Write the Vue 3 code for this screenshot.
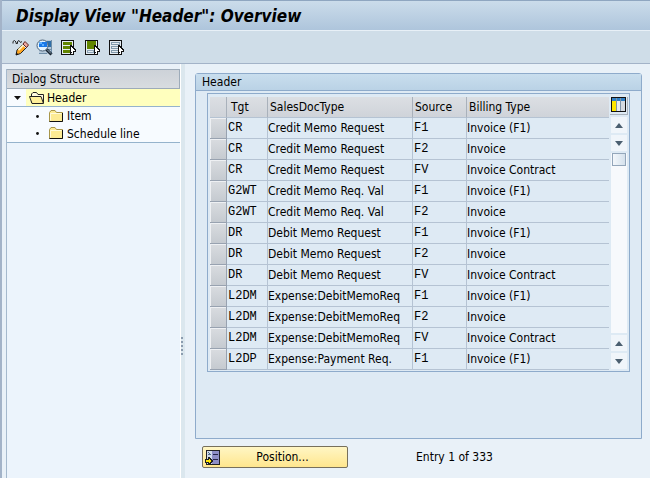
<template>
  <div class="window">
    <header class="title-bar">
      <h1>Display View "Header": Overview</h1>
    </header>

    <!-- Application toolbar -->
    <div class="toolbar">
      <button class="tool-btn" aria-label="Display / Change">
        <svg width="17" height="17" viewBox="0 0 17 17">
          <path d="M1 4.500 V2.500 L2.500 1.500 L4 3 V4.500 H5.500 V2.500 L7 1.500 L8.500 3.500 L10 2.500" fill="none" stroke="#222" stroke-width="1" />
          <path d="M5 11 L12 4 L15.500 7.500 L8.500 14.500 L4 16 Z" fill="#ffa51f" stroke="#222" />
          <path d="M6.500 11 L12.500 5" stroke="#fff0c0" stroke-width="2" />
          <path d="M11 5 L13 2.500 L16.500 6 L14.500 8.500 Z" fill="#f0a8a0" stroke="#5a2420" />
          <path d="M10.500 5.500 L14 9" stroke="#e8eef4" stroke-width="1" />
          <path d="M4 16 L4.500 13.500 L6.500 15.500 Z" fill="#111" />
        </svg>
      </button>
      <button class="tool-btn" aria-label="Details">
        <svg width="17" height="17" viewBox="0 0 17 17">
          <rect x="3" y="1" width="13" height="14" fill="#b4c8d9" />
          <rect x="10" y="2" width="5" height="6" fill="#2f6fa8" />
          <path d="M3 14.500 H11 M12 10.500 H16 M15.500 1 V15" stroke="#6f8ea8" />
          <circle cx="6.500" cy="6.500" r="5.500" fill="#e2f3ff" stroke="#4b6075" />
          <rect x="3" y="3" width="8" height="5" fill="#1878e8" />
          <path d="M3 3 H6 V5 H3 Z M6 5 H8 V7 H6 Z" fill="#5cb0ff" />
          <path d="M10.500 10.500 L15.500 15.500" stroke="#182430" stroke-width="3" />
          <path d="M11 10.500 L15 14.500" stroke="#8ea8bd" stroke-width="1" />
        </svg>
      </button>
      <button class="tool-btn" aria-label="Select all">
        <svg width="17" height="17" viewBox="0 0 17 17" shape-rendering="crispEdges">
          <rect x="1" y="1" width="13" height="15" fill="#111" />
          <rect x="2" y="2" width="11" height="13" fill="#e5ecf2" />
          <path d="M3 3 H12 V6 H3 Z M3 7 H12 V10 H3 Z M3 11 H12 V14 H3 Z" fill="#628500" />
          <path d="M10 6 H11 L16 11 V13 H14 V16 H12 V14 H11 V15 H10 Z" fill="#111" />
          <path d="M11 8 L15 12 H13 V15 H12 V13 H11 Z" fill="#fff" />
        </svg>
      </button>
      <button class="tool-btn" aria-label="Select block">
        <svg width="17" height="17" viewBox="0 0 17 17" shape-rendering="crispEdges">
          <rect x="1" y="1" width="13" height="15" fill="#111" />
          <rect x="2" y="2" width="11" height="13" fill="#e5ecf2" />
          <rect x="3" y="2" width="9" height="8" fill="#628500" />
          <rect x="3" y="11" width="7" height="3" fill="#8da3b5" />
          <rect x="4" y="12" width="5" height="1" fill="#e5ecf2" />
          <path d="M10 6 H11 L16 11 V13 H14 V16 H12 V14 H11 V15 H10 Z" fill="#111" />
          <path d="M11 8 L15 12 H13 V15 H12 V13 H11 Z" fill="#fff" />
        </svg>
      </button>
      <button class="tool-btn" aria-label="Deselect all">
        <svg width="17" height="17" viewBox="0 0 17 17" shape-rendering="crispEdges">
          <rect x="1" y="1" width="13" height="15" fill="#111" />
          <rect x="2" y="2" width="11" height="13" fill="#e5ecf2" />
          <path d="M3 3 H12 V6 H3 Z M3 7 H12 V10 H3 Z M3 11 H12 V14 H3 Z" fill="#8199ab" />
          <path d="M4 4 H11 V5 H4 Z M4 8 H11 V9 H4 Z M4 12 H11 V13 H4 Z" fill="#e5ecf2" />
          <path d="M10 6 H11 L16 11 V13 H14 V16 H12 V14 H11 V15 H10 Z" fill="#111" />
          <path d="M11 8 L15 12 H13 V15 H12 V13 H11 Z" fill="#fff" />
        </svg>
      </button>
    </div>

    <div class="work-area">
      <!-- Dialog structure tree -->
      <nav class="tree">
        <div class="tree-title">Dialog Structure</div>
        <ul>
          <li
            v-for="node in nodes"
            :key="node.label"
            :class="['tree-row', { root: node.root, last: node.last }]"
          >
            <span class="marker">
              <svg v-if="node.root" width="7" height="4" viewBox="0 0 7 4"><path d="M0 0 H7 L3.5 4 Z" fill="#111" /></svg>
              <svg v-else width="3" height="3" viewBox="0 0 3 3"><circle cx="1.5" cy="1.5" r="1.4" fill="#111" /></svg>
            </span>
            <a href="#" @click.prevent>
              <svg v-if="node.root" width="16" height="13" viewBox="0 0 16 13">
                <path d="M2.500 12 V3 L4 1.500 H7.500 L9 3.500 H14.500 V12" fill="#fffbe0" stroke="#222" />
                <path d="M0.500 5.500 H12 L14.500 12.500 H3 Z" fill="#fff09a" stroke="#222" />
              </svg>
              <svg v-else width="15" height="13" viewBox="0 0 15 13">
                <path d="M0.500 11.500 V2.500 L2 0.500 H6 L7.500 2.500 H13.500 V11.500 Z" fill="#fdeb94" stroke="#a8964a" />
                <path d="M1.500 10.500 V3.500 H12.500" fill="none" stroke="#fffbdc" />
                <path d="M0.500 11.500 H13.500 V3" fill="none" stroke="#111" />
              </svg>
              <span>{{ node.label }}</span>
            </a>
          </li>
        </ul>
      </nav>

      <div class="splitter"><i v-for="n in 5" :key="n"></i></div>

      <main class="content">
        <section class="panel">
          <h2>Header</h2>
          <div class="grid-box">
            <table>
              <thead>
                <tr>
                  <th class="col-sel"></th>
                  <th class="col-tgt">Tgt</th>
                  <th class="col-sales">SalesDocType</th>
                  <th class="col-source">Source</th>
                  <th>Billing Type</th>
                </tr>
              </thead>
              <tbody>
                <tr v-for="(row, idx) in rows" :key="idx">
                  <td class="sel"><button :aria-label="`Select row ${idx + 1}`"></button></td>
                  <td class="code">{{ row[0] }}</td>
                  <td>{{ row[1] }}</td>
                  <td class="code">{{ row[2] }}</td>
                  <td>{{ row[3] }}</td>
                </tr>
              </tbody>
            </table>
            <div class="side">
              <button class="config" aria-label="Table settings">
                <svg width="15" height="15" viewBox="0 0 15 15" shape-rendering="crispEdges">
                  <rect width="15" height="15" fill="#111" />
                  <rect x="1" y="1" width="13" height="3" fill="#2f7fc4" />
                  <rect x="1" y="4" width="4" height="10" fill="#ffe600" />
                  <rect x="6" y="4" width="3" height="10" fill="#e9ecf0" />
                  <rect x="10" y="4" width="4" height="10" fill="#d5dae0" />
                  <path d="M5 1 H6 V14 H5 Z M9 1 H10 V14 H9 Z" fill="#8094a8" />
                </svg>
              </button>
              <div class="scrollbar">
                <button class="arrow" aria-label="Scroll to top"><svg width="8" height="5" viewBox="0 0 8 5"><path d="M0 5 L4 0 L8 5 Z" fill="#4b5f70" /></svg></button>
                <button class="arrow" aria-label="Scroll up"><svg width="8" height="5" viewBox="0 0 8 5"><path d="M0 0 L4 5 L8 0 Z" fill="#4b5f70" /></svg></button>
                <div class="track"><div class="thumb"></div></div>
                <button class="arrow" aria-label="Scroll down"><svg width="8" height="5" viewBox="0 0 8 5"><path d="M0 5 L4 0 L8 5 Z" fill="#4b5f70" /></svg></button>
                <button class="arrow" aria-label="Scroll to bottom"><svg width="8" height="5" viewBox="0 0 8 5"><path d="M0 0 L4 5 L8 0 Z" fill="#4b5f70" /></svg></button>
              </div>
            </div>
          </div>
        </section>

        <div class="footer">
          <button class="btn-position">
            <svg width="15" height="15" viewBox="0 0 15 15" shape-rendering="crispEdges">
              <rect x="1" y="0" width="14" height="15" fill="#222" />
              <rect x="2" y="1" width="5" height="13" fill="#d3dceb" />
              <rect x="7" y="1" width="7" height="13" fill="#8e8ec6" />
              <path d="M8 4 H13 V5 H8 Z M8 9 H13 V10 H8 Z" fill="#26264a" />
              <path d="M3 2 H4 V3 H5 V4 H6 V5 H3 V4 H4 Z" fill="#54708c" />
              <path d="M0 9 H3 V7 H4 L8 11 L4 15 H3 V13 H0 Z" fill="#222" />
              <path d="M1 10 H4 V9 L6 11 L4 13 V12 H1 Z" fill="#ffe600" />
            </svg>
            <span>Position...</span>
          </button>
          <span class="entry">Entry 1 of 333</span>
        </div>
      </main>
    </div>
  </div>
</template>

<script setup>
const nodes = [
  { label: 'Header', root: true },
  { label: 'Item' },
  { label: 'Schedule line', last: true },
]

// Tgt, SalesDocType, Source, Billing Type
const rows = [
  ['CR', 'Credit Memo Request', 'F1', 'Invoice (F1)'],
  ['CR', 'Credit Memo Request', 'F2', 'Invoice'],
  ['CR', 'Credit Memo Request', 'FV', 'Invoice Contract'],
  ['G2WT', 'Credit Memo Req. Val', 'F1', 'Invoice (F1)'],
  ['G2WT', 'Credit Memo Req. Val', 'F2', 'Invoice'],
  ['DR', 'Debit Memo Request', 'F1', 'Invoice (F1)'],
  ['DR', 'Debit Memo Request', 'F2', 'Invoice'],
  ['DR', 'Debit Memo Request', 'FV', 'Invoice Contract'],
  ['L2DM', 'Expense:DebitMemoReq', 'F1', 'Invoice (F1)'],
  ['L2DM', 'Expense:DebitMemoReq', 'F2', 'Invoice'],
  ['L2DM', 'Expense:DebitMemoReq', 'FV', 'Invoice Contract'],
  ['L2DP', 'Expense:Payment Req.', 'F1', 'Invoice (F1)'],
]
</script>

<style>
body { margin: 0; background: #e9f1f8; }
</style>

<style scoped>
.window {
  box-sizing: border-box; min-height: 100vh;
  display: flex; flex-direction: column;
  border-left: 2px solid #a3b3c8;
  background: #e9f1f8; color: #000;
  font-family: "DejaVu Sans Condensed", "DejaVu Sans", sans-serif;
  font-size: 12px; line-height: 18px;
}
button {
  padding: 0; border: none; background: none;
  font: inherit; color: inherit; cursor: pointer;
}
svg { display: block; flex: none; }

/* TITLE */
.title-bar {
  height: 31px; box-sizing: border-box; padding-left: 14px;
  display: flex; align-items: center;
  border-top: 1px solid #8fa6c0; border-bottom: 1px solid #e8f0f7;
  background: linear-gradient(#cbdcea, #aec5dc);
}
.title-bar h1 {
  margin: 0; font-size: 17px; line-height: 20px;
  font-weight: bold; font-style: italic;
}

/* TOOLBAR */
.toolbar {
  height: 33px; box-sizing: border-box; padding: 0 10px;
  display: flex; align-items: center; gap: 7px;
  border-bottom: 1px solid #a3b3c8; background: #cfdde8;
}

.work-area { flex: 1; display: flex; }

/* TREE */
.tree {
  width: 174px; margin: 5px 0 0 4px; box-sizing: border-box;
  background: #ecf4fc; border-left: 1px solid #a5b9cd;
}
.tree-title {
  height: 20px; box-sizing: border-box; padding-left: 5px;
  border: 1px solid #9dabb9; border-left: none;
  background: linear-gradient(#cdd2d8, #d8dce0);
}
.tree ul { margin: 0; padding: 0; list-style: none; }
.tree-row { height: 18px; display: flex; background: #f7fbff; }
.tree-row.root, .tree-row.last { box-sizing: border-box; border-bottom: 1px solid #95b3cc; }
.tree-row a {
  flex: 1; display: flex; align-items: center; gap: 3px;
  color: inherit; text-decoration: none;
}
.marker {
  width: 42px; padding-right: 10px; box-sizing: border-box;
  display: flex; align-items: center; justify-content: flex-end;
}
.root .marker { width: 19px; padding-right: 5px; }
.root a { padding-left: 3px; gap: 2px; background: #ffffbe; }

/* SPLITTER */
.splitter {
  width: 5px; box-sizing: border-box; padding-bottom: 123px;
  display: flex; flex-direction: column; justify-content: flex-end; gap: 2px;
  border-left: 1px solid #fff; background: #dbe7ee;
}
.splitter i { width: 2px; height: 2px; background: #8b9cae; }

/* PANEL */
.content { flex: 1; min-width: 0; padding: 9px 8px 0 10px; }
.panel {
  box-sizing: border-box; min-height: 366px;
  border: 1px solid #8eabcb; border-radius: 3px 3px 0 0;
  background: #deeaf4;
}
.panel h2 {
  margin: 0; padding-left: 6px; height: 16px; line-height: 16px;
  font-size: 12px; font-weight: normal;
  border-bottom: 1px solid #8eabcb;
  background: linear-gradient(#c9deee, #bad2e6);
}
.grid-box {
  margin: 2px 11px 0; padding: 3px 0 1px 2px;
  display: flex;
  border: 1px solid #8eabcb;
}
table { flex: 1; table-layout: fixed; border-collapse: separate; border-spacing: 0; }
th, td {
  box-sizing: border-box; height: 21px; padding: 0; text-align: left;
  font-weight: normal; white-space: nowrap; overflow: hidden;
  border-right: 1px solid #b5c3d3; border-bottom: 1px solid #b5c3d3;
}
th {
  padding-left: 2px;
  background: linear-gradient(#dcdfe3, #cfd3d9);
  border-right-color: #a9b1bb;
}
td { line-height: 20px; }
th:last-child, td:last-child { border-right: none; }
.col-sel { width: 17px; }
.col-tgt { width: 41px; padding-left: 4px; }
.col-sales { width: 145px; }
.col-source { width: 54px; }
.code { padding-left: 1px; font-family: "Liberation Mono", monospace; }
.sel { border-color: #98a2b0; }
.sel button {
  display: block; width: 100%; height: 20px;
  border-top: 1px solid #eef0f3; border-left: 1px solid #eef0f3;
  background: linear-gradient(#d8dbdf, #c5cad0);
}

/* SCROLLBAR */
.side { width: 20px; display: flex; flex-direction: column; align-items: center; }
.config {
  width: 18px; height: 18px; display: flex; justify-content: center;
  border-right: 1px solid #a9b1bb; border-bottom: 1px solid #a9b1bb;
}
.scrollbar {
  width: 16px; flex: 1; margin: 2px 0 1px;
  display: flex; flex-direction: column; gap: 2px;
}
.arrow {
  height: 16px; display: flex; align-items: center; justify-content: center;
  background: #f0f5fa;
}
.track { flex: 1; background: #f7f9fc; }
.thumb {
  height: 13px; box-sizing: border-box; margin: 0 1px;
  border: 1px solid #93a6ba; background: linear-gradient(90deg, #f3f7fb, #d5e1ec);
}

/* FOOTER */
.footer { display: flex; align-items: center; gap: 68px; margin-top: 7px; padding-left: 7px; }
.btn-position {
  width: 146px; height: 22px; box-sizing: border-box; padding: 0 2px;
  display: flex; align-items: center;
  border: 1px solid #77705c; border-radius: 2px;
  background: linear-gradient(#fff6c4, #ffe68e);
}
.btn-position span { flex: 1; text-align: center; }
</style>
